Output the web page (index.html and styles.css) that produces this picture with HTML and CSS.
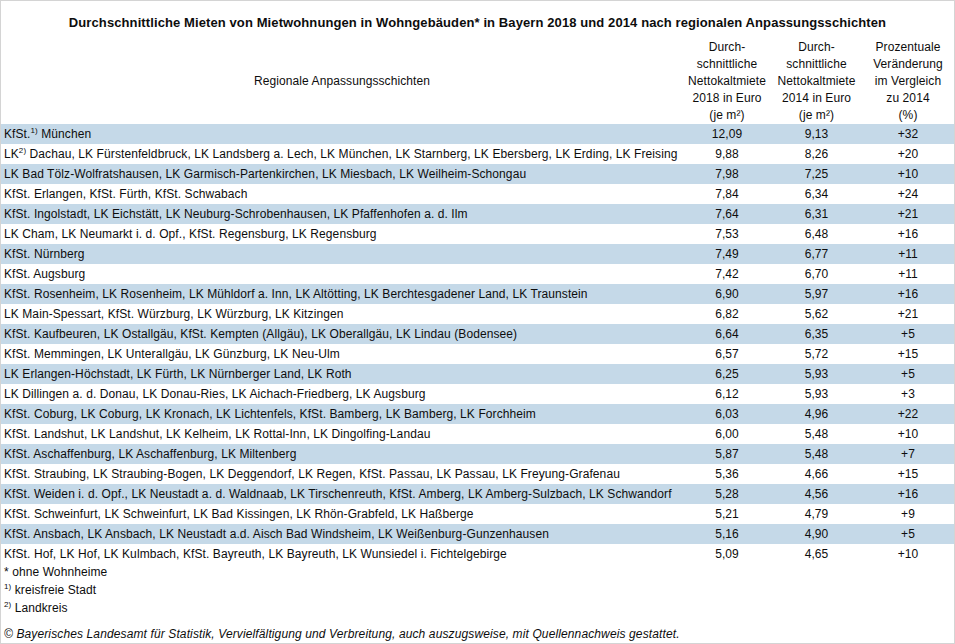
FILE: index.html
```html
<!DOCTYPE html>
<html lang="de">
<head>
<meta charset="utf-8">
<title>Durchschnittliche Mieten</title>
<link rel="stylesheet" href="styles.css">
</head>
<body>
<div class="page">
  <h1 class="title">Durchschnittliche Mieten von Mietwohnungen in Wohngebäuden* in Bayern 2018 und 2014 nach regionalen Anpassungsschichten</h1>
  <table class="data">
    <colgroup>
      <col class="c-region"><col class="c-v18"><col class="c-v14"><col class="c-pct">
    </colgroup>
    <thead>
      <tr>
        <th class="h-region">Regionale Anpassungsschichten</th>
        <th>Durch-<br>schnittliche<br>Nettokaltmiete<br>2018 in Euro<br>(je m²)</th>
        <th>Durch-<br>schnittliche<br>Nettokaltmiete<br>2014 in Euro<br>(je m²)</th>
        <th>Prozentuale<br>Veränderung<br>im Vergleich<br>zu 2014<br>(%)</th>
      </tr>
    </thead>
    <tbody>
      <tr class="alt"><td>KfSt.<sup>1)</sup> München</td><td>12,09</td><td>9,13</td><td>+32</td></tr>
      <tr><td>LK<sup>2)</sup> Dachau, LK Fürstenfeldbruck, LK Landsberg a. Lech, LK München, LK Starnberg, LK Ebersberg, LK Erding, LK Freising</td><td>9,88</td><td>8,26</td><td>+20</td></tr>
      <tr class="alt"><td>LK Bad Tölz-Wolfratshausen, LK Garmisch-Partenkirchen, LK Miesbach, LK Weilheim-Schongau</td><td>7,98</td><td>7,25</td><td>+10</td></tr>
      <tr><td>KfSt. Erlangen, KfSt. Fürth, KfSt. Schwabach</td><td>7,84</td><td>6,34</td><td>+24</td></tr>
      <tr class="alt"><td>KfSt. Ingolstadt, LK Eichstätt, LK Neuburg-Schrobenhausen, LK Pfaffenhofen a. d. Ilm</td><td>7,64</td><td>6,31</td><td>+21</td></tr>
      <tr><td>LK Cham, LK Neumarkt i. d. Opf., KfSt. Regensburg, LK Regensburg</td><td>7,53</td><td>6,48</td><td>+16</td></tr>
      <tr class="alt"><td>KfSt. Nürnberg</td><td>7,49</td><td>6,77</td><td>+11</td></tr>
      <tr><td>KfSt. Augsburg</td><td>7,42</td><td>6,70</td><td>+11</td></tr>
      <tr class="alt"><td>KfSt. Rosenheim, LK Rosenheim, LK Mühldorf a. Inn, LK Altötting, LK Berchtesgadener Land, LK Traunstein</td><td>6,90</td><td>5,97</td><td>+16</td></tr>
      <tr><td>LK Main-Spessart, KfSt. Würzburg, LK Würzburg, LK Kitzingen</td><td>6,82</td><td>5,62</td><td>+21</td></tr>
      <tr class="alt"><td>KfSt. Kaufbeuren, LK Ostallgäu, KfSt. Kempten (Allgäu), LK Oberallgäu, LK Lindau (Bodensee)</td><td>6,64</td><td>6,35</td><td>+5</td></tr>
      <tr><td>KfSt. Memmingen, LK Unterallgäu, LK Günzburg, LK Neu-Ulm</td><td>6,57</td><td>5,72</td><td>+15</td></tr>
      <tr class="alt"><td>LK Erlangen-Höchstadt, LK Fürth, LK Nürnberger Land, LK Roth</td><td>6,25</td><td>5,93</td><td>+5</td></tr>
      <tr><td>LK Dillingen a. d. Donau, LK Donau-Ries, LK Aichach-Friedberg, LK Augsburg</td><td>6,12</td><td>5,93</td><td>+3</td></tr>
      <tr class="alt"><td>KfSt. Coburg, LK Coburg, LK Kronach, LK Lichtenfels, KfSt. Bamberg, LK Bamberg, LK Forchheim</td><td>6,03</td><td>4,96</td><td>+22</td></tr>
      <tr><td>KfSt. Landshut, LK Landshut, LK Kelheim, LK Rottal-Inn, LK Dingolfing-Landau</td><td>6,00</td><td>5,48</td><td>+10</td></tr>
      <tr class="alt"><td>KfSt. Aschaffenburg, LK Aschaffenburg, LK Miltenberg</td><td>5,87</td><td>5,48</td><td>+7</td></tr>
      <tr><td>KfSt. Straubing, LK Straubing-Bogen, LK Deggendorf, LK Regen, KfSt. Passau, LK Passau, LK Freyung-Grafenau</td><td>5,36</td><td>4,66</td><td>+15</td></tr>
      <tr class="alt"><td>KfSt. Weiden i. d. Opf., LK Neustadt a. d. Waldnaab, LK Tirschenreuth, KfSt. Amberg, LK Amberg-Sulzbach, LK Schwandorf</td><td>5,28</td><td>4,56</td><td>+16</td></tr>
      <tr><td>KfSt. Schweinfurt, LK Schweinfurt, LK Bad Kissingen, LK Rhön-Grabfeld, LK Haßberge</td><td>5,21</td><td>4,79</td><td>+9</td></tr>
      <tr class="alt"><td>KfSt. Ansbach, LK Ansbach, LK Neustadt a.d. Aisch Bad Windsheim, LK Weißenburg-Gunzenhausen</td><td>5,16</td><td>4,90</td><td>+5</td></tr>
      <tr><td>KfSt. Hof, LK Hof, LK Kulmbach, KfSt. Bayreuth, LK Bayreuth, LK Wunsiedel i. Fichtelgebirge</td><td>5,09</td><td>4,65</td><td>+10</td></tr>
    </tbody>
  </table>
  <div class="notes">
    <p class="note">* ohne Wohnheime</p>
    <p class="note"><sup>1)</sup> kreisfreie Stadt</p>
    <p class="note"><sup>2)</sup> Landkreis</p>
  </div>
  <p class="copyright">© Bayerisches Landesamt für Statistik, Vervielfältigung und Verbreitung, auch auszugsweise, mit Quellennachweis gestattet.</p>
</div>
</body>
</html>
```
FILE: styles.css
```css
html, body {
  margin: 0;
  padding: 0;
  background: #ffffff;
}

.page {
  box-sizing: border-box;
  width: 955px;
  height: 644px;
  border: 1px solid #d4d4d4;
  font-family: "Liberation Sans", Arial, sans-serif;
  font-size: 12px;
  letter-spacing: 0.09px;
  color: #0d0d0d;
  display: flex;
  flex-direction: column;
}

.title {
  margin: 0;
  padding: 15px 0 0;
  height: 23px;
  font-size: 13px;
  font-weight: bold;
  letter-spacing: 0.1px;
  line-height: 14px;
  text-align: center;
}

.data {
  border-collapse: collapse;
  table-layout: fixed;
  width: 953px;
}

.c-region { width: 682px; }
.c-v18 { width: 88px; }
.c-v14 { width: 91px; }
.c-pct { width: 92px; }

.data th {
  font-weight: normal;
  line-height: 17px;
  height: 85px;
  padding: 0;
  text-align: center;
  vertical-align: middle;
}

.data td {
  height: 20px;
  padding: 0;
  line-height: 20px;
  text-align: center;
  white-space: nowrap;
}

.data td:first-child {
  text-align: left;
  padding-left: 3px;
}

.data tr.alt td {
  background: #c5d9e8;
}

sup {
  font-size: 8px;
  line-height: 0;
  vertical-align: 5px;
}

.notes {
  padding-left: 3px;
}

.note {
  margin: 0;
  line-height: 18px;
}

.note:first-child {
  line-height: 17px;
}

.copyright {
  margin: auto 0 0;
  padding-left: 3px;
  font-style: italic;
  letter-spacing: 0.12px;
  line-height: 18px;
}
```
